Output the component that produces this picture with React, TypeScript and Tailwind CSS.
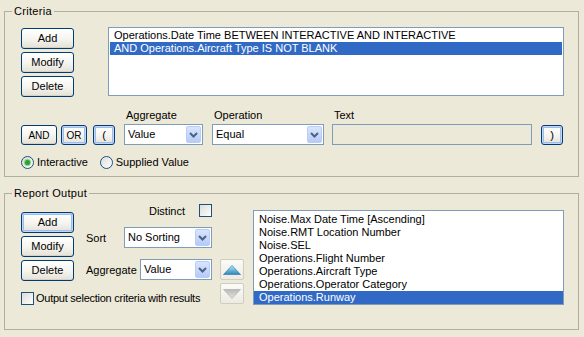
import React from "react";

const font = { fontFamily: '"Liberation Sans", Arial, sans-serif' };

function XPButton({ children, w, h = 21, focus = false }: { children: React.ReactNode; w: number; h?: number; focus?: boolean }) {
  return (
    <div
      className={
        "flex items-center justify-center rounded-[3px] border border-[#003C74] bg-gradient-to-b from-[#FFFFFF] via-[#F6F5F0] to-[#E3E1D8] text-[11px] leading-[13px] text-black " +
        (focus ? "shadow-[inset_0_0_0_1px_#C4D6F5,inset_0_0_0_2px_#9DBCEF]" : "shadow-[inset_0_-1px_0_#D6D0C5]")
      }
      style={{ width: w, height: h }}
    >
      {children}
    </div>
  );
}

function Chevron() {
  return (
    <svg width="9" height="6" viewBox="0 0 9 6">
      <path d="M1 1 L4.5 4.5 L8 1" fill="none" stroke="#4D6185" strokeWidth="2" />
    </svg>
  );
}

function Combo({ value, w }: { value: string; w: number }) {
  return (
    <div className="flex h-[21px] items-stretch border border-[#7F9DB9] bg-white" style={{ width: w }}>
      <div className="flex flex-1 items-center pl-[3px] text-[11px] leading-[13px] text-black">{value}</div>
      <div className="m-[1px] flex w-[15px] items-center justify-center rounded-[2px] border border-[#B9CDF5] bg-gradient-to-b from-[#D9E5FD] to-[#B5CBF8]">
        <Chevron />
      </div>
    </div>
  );
}

function Radio({ checked }: { checked?: boolean }) {
  return (
    <div className="flex h-[13px] w-[13px] items-center justify-center rounded-full border border-[#1C5180] bg-gradient-to-br from-[#DCDCD7] to-[#FFFFFF]">
      {checked && <div className="h-[5px] w-[5px] rounded-full bg-[#2DA12D] shadow-[0_0_1px_1px_#7FCF7F]" />}
    </div>
  );
}

function Check() {
  return <div className="h-[13px] w-[13px] border border-[#1C5180] bg-gradient-to-br from-[#DCDCD7] to-[#FFFFFF]" />;
}

function Label({ children }: { children: React.ReactNode }) {
  return <div className="whitespace-nowrap text-[11px] leading-[14px] text-black">{children}</div>;
}

export default function App() {
  const reportItems = [
    "Noise.Max Date Time [Ascending]",
    "Noise.RMT Location Number",
    "Noise.SEL",
    "Operations.Flight Number",
    "Operations.Aircraft Type",
    "Operations.Operator Category",
    "Operations.Runway",
  ];
  return (
    <div className="h-[337px] w-[584px] overflow-hidden bg-[#ECE9D8] pl-[4px] pt-[4px]" style={font}>
      {/* Criteria */}
      <fieldset className="m-0 h-[173px] w-[575px] border border-[#B0AE9E] p-0">
        <legend className="ml-[7px] px-[2px] text-[11px] leading-[14px] tracking-[0.3px] text-black">Criteria</legend>
        <div className="pl-[16px] pt-[9px]">
          <div className="flex">
            <div className="mt-[1px] flex flex-col gap-[3px]">
              <XPButton w={53}>Add</XPButton>
              <XPButton w={53}>Modify</XPButton>
              <XPButton w={53}>Delete</XPButton>
            </div>
            <div className="ml-[34px] h-[69px] w-[456px] border border-[#7F9DB9] bg-white p-[1px] text-[11px] leading-[13px] text-black">
              <div className="pl-[4px]">Operations.Date Time BETWEEN INTERACTIVE AND INTERACTIVE</div>
              <div className="bg-[#316AC5] pl-[4px] text-white">AND Operations.Aircraft Type IS NOT BLANK</div>
            </div>
          </div>
          <div className="mt-[11px] flex items-end">
            <XPButton w={36} h={20}>
              <span className="text-[10px]">AND</span>
            </XPButton>
            <div className="ml-[4px]">
              <XPButton w={26} h={20} focus>
                <span className="text-[10px]">OR</span>
              </XPButton>
            </div>
            <div className="ml-[6px]">
              <XPButton w={22} h={20} focus>
                (
              </XPButton>
            </div>
            <div className="ml-[9px] flex flex-col">
              <div className="mb-[2px] pl-[2px]">
                <Label>Aggregate</Label>
              </div>
              <Combo value="Value" w={79} />
            </div>
            <div className="ml-[9px] flex flex-col">
              <div className="mb-[2px] pl-[2px]">
                <Label>Operation</Label>
              </div>
              <Combo value="Equal" w={112} />
            </div>
            <div className="ml-[8px] flex flex-col">
              <div className="mb-[2px] pl-[2px]">
                <Label>Text</Label>
              </div>
              <div className="h-[21px] w-[200px] border border-[#7F9DB9] bg-[#ECE9D8]" />
            </div>
            <div className="ml-[9px]">
              <XPButton w={22} h={20} focus>
                )
              </XPButton>
            </div>
          </div>
          <div className="mt-[10px] flex h-[14px] items-center">
            <Radio checked />
            <div className="ml-[3px]">
              <Label>Interactive</Label>
            </div>
            <div className="ml-[12px]">
              <Radio />
            </div>
            <div className="ml-[3px]">
              <Label>Supplied Value</Label>
            </div>
          </div>
        </div>
      </fieldset>

      {/* Report Output */}
      <fieldset className="m-0 mt-[9px] h-[144px] w-[575px] border border-[#B0AE9E] p-0">
        <legend className="ml-[7px] px-[2px] text-[11px] leading-[14px] tracking-[0.3px] text-black">Report Output</legend>
        <div className="flex items-start pl-[16px] pt-[4px]">
          <div className="flex w-[191px] flex-col">
            <div className="flex">
              <div className="mt-[8px] flex flex-col gap-[3px]">
                <XPButton w={53} focus>Add</XPButton>
                <XPButton w={53}>Modify</XPButton>
                <XPButton w={53}>Delete</XPButton>
              </div>
              <div className="ml-[12px] flex w-[126px] flex-col">
                <div className="flex h-[13px] items-center justify-end gap-[14px]">
                  <Label>Distinct</Label>
                  <Check />
                </div>
                <div className="mt-[10px] flex items-center justify-between">
                  <Label>Sort</Label>
                  <Combo value="No Sorting" w={88} />
                </div>
                <div className="mt-[11px] flex items-center justify-between">
                  <Label>Aggregate</Label>
                  <Combo value="Value" w={72} />
                </div>
              </div>
            </div>
            <div className="mt-[10px] flex h-[14px] items-center">
              <Check />
              <div className="ml-[2px] tracking-[-0.25px]">
                <Label>Output selection criteria with results</Label>
              </div>
            </div>
          </div>
          <div className="ml-[8px] mt-[55px] flex flex-col gap-[3px]">
            <div className="flex h-[21px] w-[24px] items-center justify-center rounded-[2px] border border-[#CFCDC0] bg-gradient-to-b from-[#FBFBF8] to-[#EDEBE2]">
              <svg width="18" height="10" viewBox="0 0 18 10">
                <defs>
                  <linearGradient id="upg" x1="0" y1="0" x2="0" y2="1">
                    <stop offset="0" stopColor="#CDEBF7" />
                    <stop offset="0.5" stopColor="#6CB7DA" />
                    <stop offset="1" stopColor="#2F86B6" />
                  </linearGradient>
                </defs>
                <path d="M9 0.5 L17.5 9.5 L0.5 9.5 Z" fill="url(#upg)" stroke="#3A88B3" strokeWidth="0.8" />
              </svg>
            </div>
            <div className="flex h-[21px] w-[24px] items-center justify-center rounded-[2px] border border-[#CFCDC0] bg-gradient-to-b from-[#FBFBF8] to-[#EDEBE2]">
              <svg width="18" height="10" viewBox="0 0 18 10">
                <defs>
                  <linearGradient id="dng" x1="0" y1="0" x2="0" y2="1">
                    <stop offset="0" stopColor="#B8B8B8" />
                    <stop offset="1" stopColor="#E4E4E4" />
                  </linearGradient>
                </defs>
                <path d="M0.5 0.5 L17.5 0.5 L9 9.5 Z" fill="url(#dng)" stroke="#B5B5B5" strokeWidth="0.8" />
              </svg>
            </div>
          </div>
          <div className="ml-[9px] mt-[6px] h-[95px] w-[311px] border border-[#7F9DB9] bg-white pt-[2px] text-[11px] leading-[13px] text-black">
            {reportItems.map((it, i) => (
              <div key={it} className={"pl-[5px] " + (i === reportItems.length - 1 ? "bg-[#316AC5] text-white" : "")}>
                {it}
              </div>
            ))}
          </div>
        </div>
      </fieldset>
    </div>
  );
}
